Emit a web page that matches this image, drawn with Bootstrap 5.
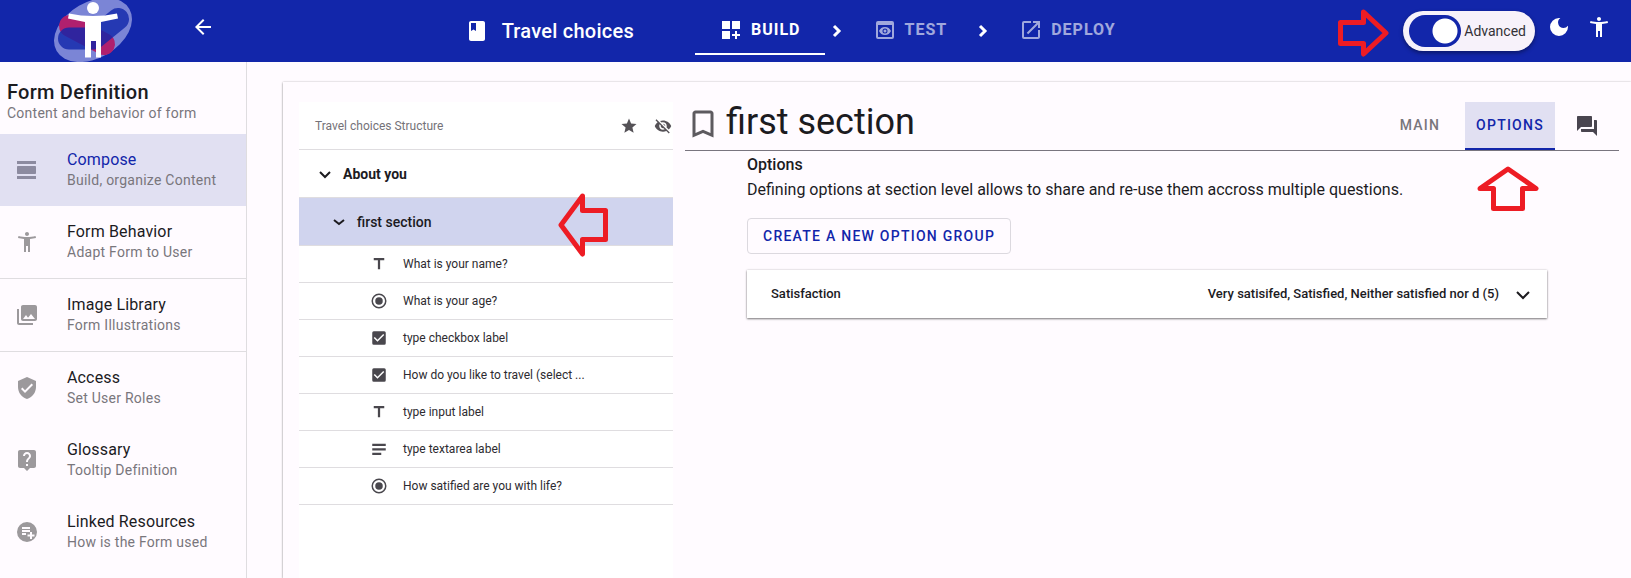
<!DOCTYPE html>
<html lang="en">
<head>
<meta charset="utf-8">
<meta name="viewport" content="width=device-width, initial-scale=1">
<title>Travel choices</title>
<link href="https://cdn.jsdelivr.net/npm/bootstrap@5.3.0/dist/css/bootstrap.min.css" rel="stylesheet">
<style>
:root { --brand: #1226aa; --surface: #fffbff; --ink: #1c1b1f; --muted: #79767c; --rule: #dfdde0; --tint: #e1e0f2; --signal: #ed1c24; }
body { font-family: Roboto, "Liberation Sans", sans-serif; font-size: 16px; line-height: 24px; color: var(--ink); background: var(--surface); min-height: 100vh; }
svg { display: block; flex: none; }
.icon { width: 24px; height: 24px; fill: currentColor; }
.icon-sm { width: 18px; height: 18px; fill: currentColor; }
.icon-lg { width: 36px; height: 36px; fill: currentColor; }
.chev { fill: none; stroke: currentColor; }
a, button { color: inherit; text-decoration: none; }
.plain-btn { background: none; border: 0; padding: 0; text-align: left; font: inherit; }

.topbar { background: var(--brand); height: 62px; color: #fff; }
.brand-logo { margin-left: 54px; }
.back { margin: 0 0 8px 59px; }
.form-title { font-size: 20px; font-weight: 500; letter-spacing: .0125em; margin: 0 61px 0 13px; }
.stage { height: 48px; padding: 0 24px; gap: 8px; font-weight: 700; letter-spacing: 1px; opacity: .6; border-bottom: 2px solid transparent; }
.stage.current { opacity: 1; border-color: #fff; }
.tools { padding-left: 14px; padding-right: 20px; }
.mode-pill { height: 40px; padding: 0 9px 0 6px; background: #f7f2fa; color: #333136; font-size: 14px; box-shadow: 0 2px 4px rgba(0,0,0,.4); }
.mode-pill .form-check-input { width: 52px; height: 32px; margin: 0 3px 0 0; float: none; border: 0; background-color: var(--brand); background-position: 0 0; background-size: 100% 100%; border-radius: 16px; }
.mode-pill .form-check-input:checked { background-image: radial-gradient(circle at 36px 16px, #fff 12px, transparent 13px); }
.pointer { position: absolute; fill: none; stroke: var(--signal); stroke-width: 5; stroke-linejoin: round; z-index: 2; }
.pointer-mode { right: calc(100% + 14px); top: -2px; }
.pointer-row { right: 65px; top: -5px; }
.pointer-tab { left: 12px; top: 64px; }

.side { width: 247px; flex: none; border-right: 1px solid var(--rule); }
.side-head { padding: 19px 7px 11px; }
.side-head h1 { font-size: 20px; line-height: 22px; font-weight: 500; margin: 0; letter-spacing: .0125em; }
.sub { display: block; font-size: 14px; line-height: 20px; color: var(--muted); letter-spacing: .0179em; }
.side-link { height: 72px; padding: 0 15px; gap: 28px; }
.side-link .icon { color: #9c999c; }
.side-link strong { display: block; font-weight: 400; line-height: 20px; letter-spacing: .0094em; }
.side-link.active { background: var(--tint); }
.side-link.active strong { color: var(--brand); }
.side-link.active .icon { color: #8c8ba0; }
.ruled { border-bottom: 1px solid var(--rule); }

.sheet { margin: 20px 0 0 36px; padding: 20px 12px 0 16px; gap: 12px; box-shadow: 0 1px 2px rgba(0,0,0,.35), 0 0 2px rgba(0,0,0,.2); }
.tree { width: 374px; flex: none; background: #fff; font-size: 14px; }
.tree-head { height: 48px; font-size: 12px; color: #757278; padding: 0 1px 0 16px; }
.tree-head button { color: #555257; }
.node { height: 48px; }
.node .plain-btn { gap: 12px; }
.node-open { background: #d0d4ee; }
.level-1 { padding-left: 20px; font-weight: 700; }
.level-2 { padding-left: 34px; font-weight: 500; }
.question { height: 37px; padding-left: 71px; gap: 15px; font-size: 12px; color: #2d2b30; }
.question svg { color: #49474d; }

.detail-head { height: 49px; border-bottom: 1px solid #79757f; }
.detail-head h2 { font-size: 36px; line-height: 40px; font-weight: 400; margin: 0 0 8px 5px; }
.detail-head .icon-lg { color: #5d5a5f; margin-bottom: 4px; }
.tab { width: 90px; height: 48px; font-size: 14px; font-weight: 500; letter-spacing: .0893em; color: var(--muted); border-bottom: 2px solid transparent; }
.tab.active { color: var(--brand); background: var(--tint); border-color: var(--brand); }
.comments { margin: 0 20px; color: #49454f; }
.detail-body { margin-left: 62px; max-width: 800px; }
.detail-body h3 { font-size: 16px; line-height: 24px; font-weight: 500; margin: 2px 0 0; }
.detail-body p { margin: 0 0 16px; line-height: 25px; }
.create { height: 36px; padding: 0 15px; border: 1px solid #dcd9df; border-radius: 4px; color: var(--brand); font-size: 14px; font-weight: 500; letter-spacing: .0893em; line-height: 20px; }
.group { width: 100%; height: 48px; margin-top: 16px; padding: 0 16px 0 24px; background: #fff; border: 0; font-size: 13px; font-weight: 500; box-shadow: 0 1px 2px rgba(0,0,0,.5), 0 0 2px rgba(0,0,0,.15); }
</style>
</head>
<body class="d-flex flex-column">

<svg width="0" height="0" class="position-absolute" aria-hidden="true">
  <symbol id="back" viewBox="0 0 24 24"><path d="M20 11H7.83l5.59-5.59L12 4l-8 8 8 8 1.41-1.41L7.83 13H20z"/></symbol>
  <symbol id="book" viewBox="0 0 24 24"><path d="M18 2H6c-1.100 0-2 .9-2 2v16c0 1.100.9 2 2 2h12c1.100 0 2-.9 2-2V4c0-1.100-.9-2-2-2zM6 4h5v8l-2.500-1.500L6 12z"/></symbol>
  <symbol id="dash" viewBox="0 0 24 24"><path d="M3 3h8v8H3zM13 3h8v8h-8zM3 13h8v8H3zM18 13h-2v3h-3v2h3v3h2v-3h3v-2h-3z"/></symbol>
  <symbol id="preview" viewBox="0 0 24 24"><path d="M19 3H5a2 2 0 0 0-2 2v14a2 2 0 0 0 2 2h14a2 2 0 0 0 2-2V5a2 2 0 0 0-2-2zm0 16H5V7h14zm-5.500-6a1.500 1.500 0 1 1-3 0 1.500 1.500 0 0 1 3 0zM12 9c-2.730 0-5.060 1.660-6 4 .94 2.340 3.270 4 6 4s5.060-1.660 6-4c-.94-2.340-3.270-4-6-4zm0 6.500a2.500 2.500 0 1 1 0-5 2.500 2.500 0 0 1 0 5z"/></symbol>
  <symbol id="launch" viewBox="0 0 24 24"><path d="M19 19H5V5h7V3H5a2 2 0 0 0-2 2v14a2 2 0 0 0 2 2h14c1.100 0 2-.9 2-2v-7h-2zM14 3v2h3.590l-9.830 9.830 1.410 1.410L19 6.410V10h2V3z"/></symbol>
  <symbol id="moon" viewBox="0 0 24 24"><path d="M12 3a9 9 0 1 0 9 9c0-.46-.04-.92-.1-1.360a5.389 5.389 0 0 1-4.400 2.260 5.403 5.403 0 0 1-3.140-9.800c-.44-.06-.9-.1-1.360-.1z"/></symbol>
  <symbol id="person" viewBox="0 0 24 24"><path d="M20.500 6c-2.610.7-5.670 1-8.500 1s-5.890-.3-8.500-1L3 8c1.860.5 4 .83 6 1v13h2v-6h2v6h2V9c2-.17 4.140-.5 6-1zM12 6c1.100 0 2-.9 2-2s-.9-2-2-2-2 .9-2 2 .9 2 2 2z"/></symbol>
  <symbol id="day" viewBox="0 0 24 24"><path d="M2 21h19v-3H2zM20 8H3c-.55 0-1 .45-1 1v6c0 .55.45 1 1 1h17c.55 0 1-.45 1-1V9c0-.55-.45-1-1-1zM2 3v3h19V3z"/></symbol>
  <symbol id="photos" viewBox="0 0 24 24"><path d="M22 16V4c0-1.100-.9-2-2-2H8c-1.100 0-2 .9-2 2v12c0 1.100.9 2 2 2h12c1.100 0 2-.9 2-2zm-11-4l2.030 2.710L16 11l4 5H8zM2 6v14c0 1.100.9 2 2 2h14v-2H4V6z"/></symbol>
  <symbol id="shield" viewBox="0 0 24 24"><path d="M12 1L3 5v6c0 5.550 3.840 10.740 9 12 5.160-1.260 9-6.450 9-12V5zm-2 16l-4-4 1.410-1.410L10 14.170l6.590-6.590L18 9z"/></symbol>
  <symbol id="help" viewBox="0 0 24 24"><path d="M19 2H5c-1.110 0-2 .9-2 2v14c0 1.100.89 2 2 2h4l3 3 3-3h4c1.100 0 2-.9 2-2V4c0-1.100-.9-2-2-2zm-6 16h-2v-2h2zm2.070-7.750l-.9.92C13.450 11.900 13 12.500 13 14h-2v-.5c0-1.100.45-2.100 1.170-2.830l1.240-1.260c.37-.36.59-.86.59-1.410 0-1.100-.9-2-2-2s-2 .9-2 2H8c0-2.210 1.790-4 4-4s4 1.790 4 4c0 .88-.36 1.680-.93 2.250z"/></symbol>
  <symbol id="listadd" viewBox="0 0 24 24"><path fill-rule="evenodd" d="M12 2a10 10 0 1 0 0 20 10 10 0 0 0 0-20zM7 7h8v2H7zM7 10h8v2H7zM7 13h4v2H7zM15 12h2v2.500h2.500v2H17V19h-2v-2.500h-2.500v-2H15z"/></symbol>
  <symbol id="star" viewBox="0 0 24 24"><path d="M12 17.270L18.180 21l-1.640-7.030L22 9.240l-7.190-.61L12 2 9.190 8.630 2 9.240l5.460 4.730L5.820 21z"/></symbol>
  <symbol id="hidden" viewBox="0 0 24 24"><path d="M12 7c2.760 0 5 2.240 5 5 0 .65-.13 1.260-.36 1.830l2.920 2.920c1.510-1.260 2.700-2.890 3.430-4.750-1.730-4.390-6-7.500-11-7.500-1.400 0-2.740.25-3.980.7l2.160 2.160C10.740 7.130 11.350 7 12 7zM2 4.270l2.280 2.280.46.46A11.804 11.804 0 0 0 1 12c1.730 4.390 6 7.500 11 7.500 1.550 0 3.030-.3 4.380-.84l.42.42L19.730 22 21 20.730 3.270 3zM7.530 9.800l1.550 1.550c-.05.21-.08.43-.08.65 0 1.660 1.340 3 3 3 .22 0 .44-.03.65-.08l1.550 1.550c-.67.33-1.410.53-2.200.53-2.760 0-5-2.240-5-5 0-.79.2-1.530.53-2.200zm4.310-.78l3.150 3.150.02-.16c0-1.660-1.340-3-3-3z"/></symbol>
  <symbol id="text" viewBox="0 0 24 24"><path d="M5 4v3h5.500v12h3V7H19V4z"/></symbol>
  <symbol id="radio" viewBox="0 0 24 24"><path d="M12 7a5 5 0 1 0 0 10 5 5 0 0 0 0-10zm0-5a10 10 0 1 0 0 20 10 10 0 0 0 0-20zm0 18a8 8 0 1 1 0-16 8 8 0 0 1 0 16z"/></symbol>
  <symbol id="check" viewBox="0 0 24 24"><path d="M19 3H5a2 2 0 0 0-2 2v14a2 2 0 0 0 2 2h14a2 2 0 0 0 2-2V5a2 2 0 0 0-2-2zm-9 14l-5-5 1.410-1.410L10 14.170l7.590-7.590L19 8z"/></symbol>
  <symbol id="lines" viewBox="0 0 24 24"><path d="M3 5h18v3H3zM3 11h18v3H3zM3 17h12v3H3z"/></symbol>
  <symbol id="bookmark" viewBox="0 0 24 24"><path d="M17 3H7c-1.100 0-2 .9-2 2v16l7-3 7 3V5c0-1.100-.9-2-2-2zm0 15l-5-2.180L7 18V5h10z"/></symbol>
  <symbol id="forum" viewBox="0 0 24 24"><path d="M21 6h-2v9H6v2c0 .55.45 1 1 1h11l4 4V7c0-.55-.45-1-1-1zm-4 6V3c0-.55-.45-1-1-1H3c-.55 0-1 .45-1 1v14l4-4h10c.55 0 1-.45 1-1z"/></symbol>
</svg>

<header class="topbar d-flex align-items-center">
  <a href="#" aria-label="Home" class="brand-logo">
    <svg width="78" height="62" viewBox="54 0 78 62" aria-hidden="true">
      <ellipse cx="93" cy="30" rx="42" ry="28" transform="rotate(-30 93 30)" fill="#7b85d6"/>
      <path d="M70 26L104 44" stroke="#b0206e" stroke-width="22" stroke-linecap="round"/>
      <path d="M69 38.500H94L118 19" fill="none" stroke="#1026aa" stroke-opacity=".8" stroke-width="22" stroke-linecap="round" stroke-linejoin="round"/>
      <circle cx="93" cy="8" r="6" fill="#fff"/>
      <path d="M69 13.500Q93 18.500 117 13.500L118 18.500L101 22V57.500H96V41H91V57.500H85V22L68 18.500Z" fill="#fff"/>
    </svg>
  </a>
  <button type="button" class="plain-btn back" aria-label="Back"><svg class="icon"><use href="#back"/></svg></button>

  <div class="d-flex align-items-center mx-auto">
    <svg class="icon"><use href="#book"/></svg>
    <span class="form-title text-nowrap">Travel choices</span>
    <nav class="d-flex align-items-center" aria-label="Stages">
      <a href="#" class="stage current d-flex align-items-center"><svg class="icon"><use href="#dash"/></svg>BUILD</a>
      <svg class="chev" width="24" height="24" viewBox="0 0 24 24" stroke-width="3"><path d="M9 7l5 5-5 5"/></svg>
      <a href="#" class="stage d-flex align-items-center"><svg class="icon"><use href="#preview"/></svg>TEST</a>
      <svg class="chev" width="24" height="24" viewBox="0 0 24 24" stroke-width="3"><path d="M9 7l5 5-5 5"/></svg>
      <a href="#" class="stage d-flex align-items-center"><svg class="icon"><use href="#launch"/></svg>DEPLOY</a>
    </nav>
  </div>

  <div class="tools d-flex align-items-center">
    <div class="mode-pill position-relative rounded-pill d-flex align-items-center form-switch">
      <svg class="pointer pointer-mode" width="51" height="48"><path d="M2.500 13.500H25.500V3L48 24L25.500 45V34.500H2.500Z"/></svg>
      <input class="form-check-input" type="checkbox" role="switch" id="advanced" checked>
      <label for="advanced">Advanced</label>
    </div>
    <button type="button" class="plain-btn ms-2 mb-2 ps-1" aria-label="Dark mode"><svg class="icon"><use href="#moon"/></svg></button>
    <button type="button" class="plain-btn ms-3 mb-2" aria-label="Accessibility"><svg class="icon"><use href="#person"/></svg></button>
  </div>
</header>

<div class="d-flex flex-grow-1">
  <aside class="side">
    <div class="side-head">
      <h1>Form Definition</h1>
      <div class="sub">Content and behavior of form</div>
    </div>
    <nav aria-label="Form definition">
      <a href="#" class="side-link active d-flex align-items-center"><svg class="icon"><use href="#day"/></svg><span><strong>Compose</strong><span class="sub">Build, organize Content</span></span></a>
      <div class="ruled"><a href="#" class="side-link d-flex align-items-center"><svg class="icon"><use href="#person"/></svg><span><strong>Form Behavior</strong><span class="sub">Adapt Form to User</span></span></a></div>
      <div class="ruled"><a href="#" class="side-link d-flex align-items-center"><svg class="icon"><use href="#photos"/></svg><span><strong>Image Library</strong><span class="sub">Form Illustrations</span></span></a></div>
      <a href="#" class="side-link d-flex align-items-center"><svg class="icon"><use href="#shield"/></svg><span><strong>Access</strong><span class="sub">Set User Roles</span></span></a>
      <a href="#" class="side-link d-flex align-items-center"><svg class="icon"><use href="#help"/></svg><span><strong>Glossary</strong><span class="sub">Tooltip Definition</span></span></a>
      <a href="#" class="side-link d-flex align-items-center"><svg class="icon"><use href="#listadd"/></svg><span><strong>Linked Resources</strong><span class="sub">How is the Form used</span></span></a>
    </nav>
  </aside>

  <main class="sheet d-flex flex-grow-1">
    <section class="tree" aria-label="Structure">
      <div class="tree-head ruled d-flex align-items-center">
        <span class="flex-grow-1">Travel choices Structure</span>
        <button type="button" class="plain-btn" aria-label="Favorites"><svg class="icon-sm"><use href="#star"/></svg></button>
        <button type="button" class="plain-btn ms-3" aria-label="Hide"><svg class="icon-sm"><use href="#hidden"/></svg></button>
      </div>
      <div class="node ruled level-1 d-flex align-items-center">
        <button type="button" class="plain-btn d-flex align-items-center"><svg class="chev" width="12" height="12" viewBox="0 0 12 12" stroke-width="2"><path d="M1 4l5 5 5-5"/></svg>About you</button>
      </div>
      <div class="node node-open ruled level-2 d-flex align-items-center position-relative">
        <button type="button" class="plain-btn d-flex align-items-center"><svg class="chev" width="12" height="12" viewBox="0 0 12 12" stroke-width="2"><path d="M1 4l5 4 5-4"/></svg>first section</button>
        <svg class="pointer pointer-row" width="50" height="64"><path d="M47.500 17.500H24.500V3L3 32L24.500 61V46.500H47.500Z"/></svg>
      </div>
      <a href="#" class="question ruled d-flex align-items-center"><svg class="icon-sm"><use href="#text"/></svg>What is your name?</a>
      <a href="#" class="question ruled d-flex align-items-center"><svg class="icon-sm"><use href="#radio"/></svg>What is your age?</a>
      <a href="#" class="question ruled d-flex align-items-center"><svg class="icon-sm"><use href="#check"/></svg>type checkbox label</a>
      <a href="#" class="question ruled d-flex align-items-center"><svg class="icon-sm"><use href="#check"/></svg>How do you like to travel (select ...</a>
      <a href="#" class="question ruled d-flex align-items-center"><svg class="icon-sm"><use href="#text"/></svg>type input label</a>
      <a href="#" class="question ruled d-flex align-items-center"><svg class="icon-sm"><use href="#lines"/></svg>type textarea label</a>
      <a href="#" class="question ruled d-flex align-items-center"><svg class="icon-sm"><use href="#radio"/></svg>How satified are you with life?</a>
    </section>

    <section class="flex-grow-1">
      <div class="detail-head d-flex align-items-center">
        <svg class="icon-lg"><use href="#bookmark"/></svg>
        <h2 class="flex-grow-1">first section</h2>
        <a href="#" class="tab d-flex align-items-center justify-content-center">MAIN</a>
        <div class="position-relative">
          <a href="#" class="tab active d-flex align-items-center justify-content-center" aria-current="page">OPTIONS</a>
          <svg class="pointer pointer-tab" width="62" height="45"><path d="M31 3L59 22.500H45.500V42.500H16.500V22.500H3Z"/></svg>
        </div>
        <button type="button" class="plain-btn comments" aria-label="Comments"><svg class="icon"><use href="#forum"/></svg></button>
      </div>
      <div class="detail-body">
        <h3>Options</h3>
        <p>Defining options at section level allows to share and re-use them accross multiple questions.</p>
        <button type="button" class="create btn">CREATE A NEW OPTION GROUP</button>
        <button type="button" class="group d-flex align-items-center">
          <span class="flex-grow-1 text-start">Satisfaction</span>
          <span>Very satisifed, Satisfied, Neither satisfied nor d (5)</span>
          <svg class="chev ms-3" width="16" height="16" viewBox="0 0 16 16" stroke-width="2"><path d="M2 6l6 6 6-6"/></svg>
        </button>
      </div>
    </section>
  </main>
</div>
<script src="https://cdn.jsdelivr.net/npm/bootstrap@5.3.0/dist/js/bootstrap.bundle.min.js"></script>
</body>
</html>
